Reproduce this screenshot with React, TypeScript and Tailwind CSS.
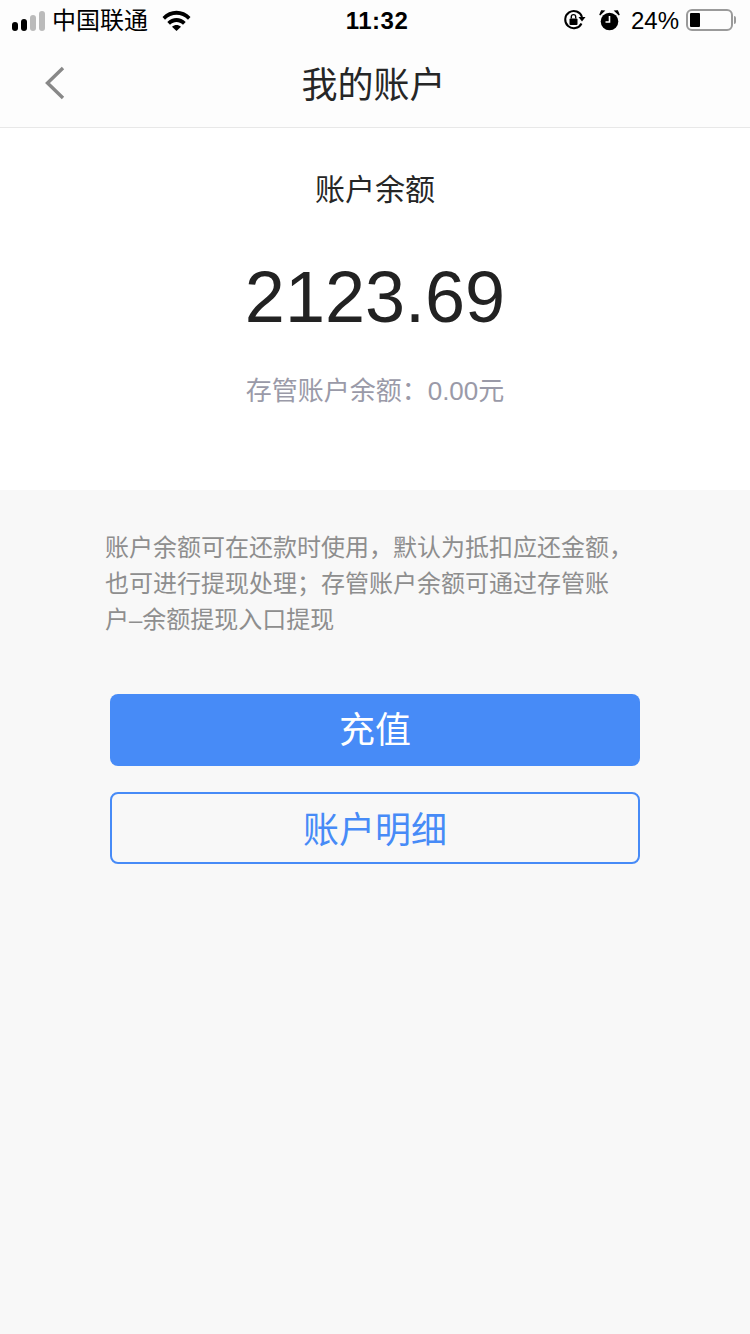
import React from "react";

const SANS = "font-['Liberation_Sans','Noto_Sans_CJK_SC',sans-serif]";

const StatusBar: React.FC = () => (
  <div className="flex h-10 items-center justify-between pl-3 pr-[14px] text-black">
    <div className="flex w-[200px] items-center">
      <div className="flex items-end gap-[3px] pt-[1px]">
        <span className="h-[9px] w-[6px] rounded-[3px] bg-black" />
        <span className="h-[12px] w-[6px] rounded-[3px] bg-black" />
        <span className="h-[16px] w-[6px] rounded-[3px] bg-[#bbbbbb]" />
        <span className="h-[20px] w-[6px] rounded-[3px] bg-[#bbbbbb]" />
      </div>
      <span className="ml-[7px] pt-[2px] text-[24px] leading-none">中国联通</span>
      <svg className="ml-[14px]" width="29" height="21" viewBox="0 0 29 21">
        <path d="M0.5 7 C8 -1.5 21 -1.5 28.5 7 L26 9.8 C19.5 3.2 9.5 3.2 3 9.8 Z" fill="#000" />
        <path d="M5.3 12 C10.5 6.6 18.5 6.6 23.7 12 L21 14.8 C17 11 12 11 8 14.8 Z" fill="#000" />
        <path d="M10 16.8 C12.8 14.4 16.2 14.4 19 16.8 L14.5 21 Z" fill="#000" />
      </svg>
    </div>
    <span className="pl-[6px] pt-[2px] text-[24px] font-bold leading-none tracking-[0.5px]">11:32</span>
    <div className="flex w-[200px] items-center justify-end">
      <svg width="23" height="22" viewBox="0 0 23 22" fill="none">
        <path d="M18.5 14.5 A8.6 8.6 0 1 1 19 8" stroke="#000" strokeWidth="2" />
        <path d="M15.5 8 L22.5 8 L19 12.5 Z" fill="#000" />
        <rect x="6.5" y="9.5" width="8" height="6.5" rx="1" fill="#000" />
        <path d="M8.3 9.5 V7.8 A2.2 2.2 0 0 1 12.7 7.8 V9.5" stroke="#000" strokeWidth="1.4" />
      </svg>
      <svg className="ml-[13px]" width="21" height="21" viewBox="0 0 21 21">
        <circle cx="10.5" cy="11.5" r="8.8" fill="#000" />
        <path d="M0.8 5 L5 1 L2.5 0.8 Z M20.2 5 L16 1 L18.5 0.8 Z" fill="#000" stroke="#000" strokeWidth="1.2" />
        <path d="M10.5 6 V12 H6.5" stroke="#fff" strokeWidth="1.6" fill="none" />
      </svg>
      <span className="ml-[11px] pt-[2px] text-[24px] leading-none">24%</span>
      <div className="ml-[7px] flex items-center">
        <div className="h-[22px] w-[47px] rounded-[6px] border-2 border-[#9a9a9a] p-[2px]">
          <div className="h-full w-[10px] rounded-[1px] bg-black" />
        </div>
        <span className="ml-[1px] h-[8px] w-[2px] rounded-r-full bg-[#9a9a9a]" />
      </div>
    </div>
  </div>
);

export default function App() {
  return (
    <div className={`${SANS} flex min-h-[1334px] flex-col bg-[#f8f8f8]`}>
      <div className="bg-[#fdfdfd]">
        <StatusBar />
        <div className="relative flex h-[88px] items-center justify-center border-b border-[#e8e8e8] pr-[3px] pt-[4px]">
          <svg className="absolute left-[44px] top-[26px]" width="22" height="34" viewBox="0 0 22 34" fill="none">
            <path d="M19 2 L3.5 17 L19 32" stroke="#888888" strokeWidth="3.4" />
          </svg>
          <h1 className="text-[36px] font-normal leading-none text-[#262626]">我的账户</h1>
        </div>
      </div>

      <div className="flex h-[362px] flex-col items-center bg-white pt-[46px]">
        <p className="text-[30px] leading-[32px] text-[#262626]">账户余额</p>
        <p className="mt-[50px] text-[72px] leading-[82px] text-[#222222]">2123.69</p>
        <p className="mt-[37px] text-[26px] leading-[32px] text-[#9a9aa8]">存管账户余额：0.00元</p>
      </div>

      <div className="flex flex-col pt-[40px]">
        <p className="ml-[105px] whitespace-nowrap text-[24px] leading-[36px] text-[#8e8e8e]">
          账户余额可在还款时使用，默认为抵扣应还金额，
          <br />
          也可进行提现处理；存管账户余额可通过存管账
          <br />
          户–余额提现入口提现
        </p>
        <div className="mx-[110px] mt-[56px] flex flex-col gap-[26px]">
          <button className="flex h-[72px] items-center justify-center rounded-[8px] bg-[#478bf7] pt-[2px] text-[36px] text-white">
            充值
          </button>
          <button className="flex h-[72px] items-center justify-center rounded-[8px] border-2 border-[#478bf7] pt-[6px] text-[36px] text-[#478bf7]">
            账户明细
          </button>
        </div>
      </div>
    </div>
  );
}
